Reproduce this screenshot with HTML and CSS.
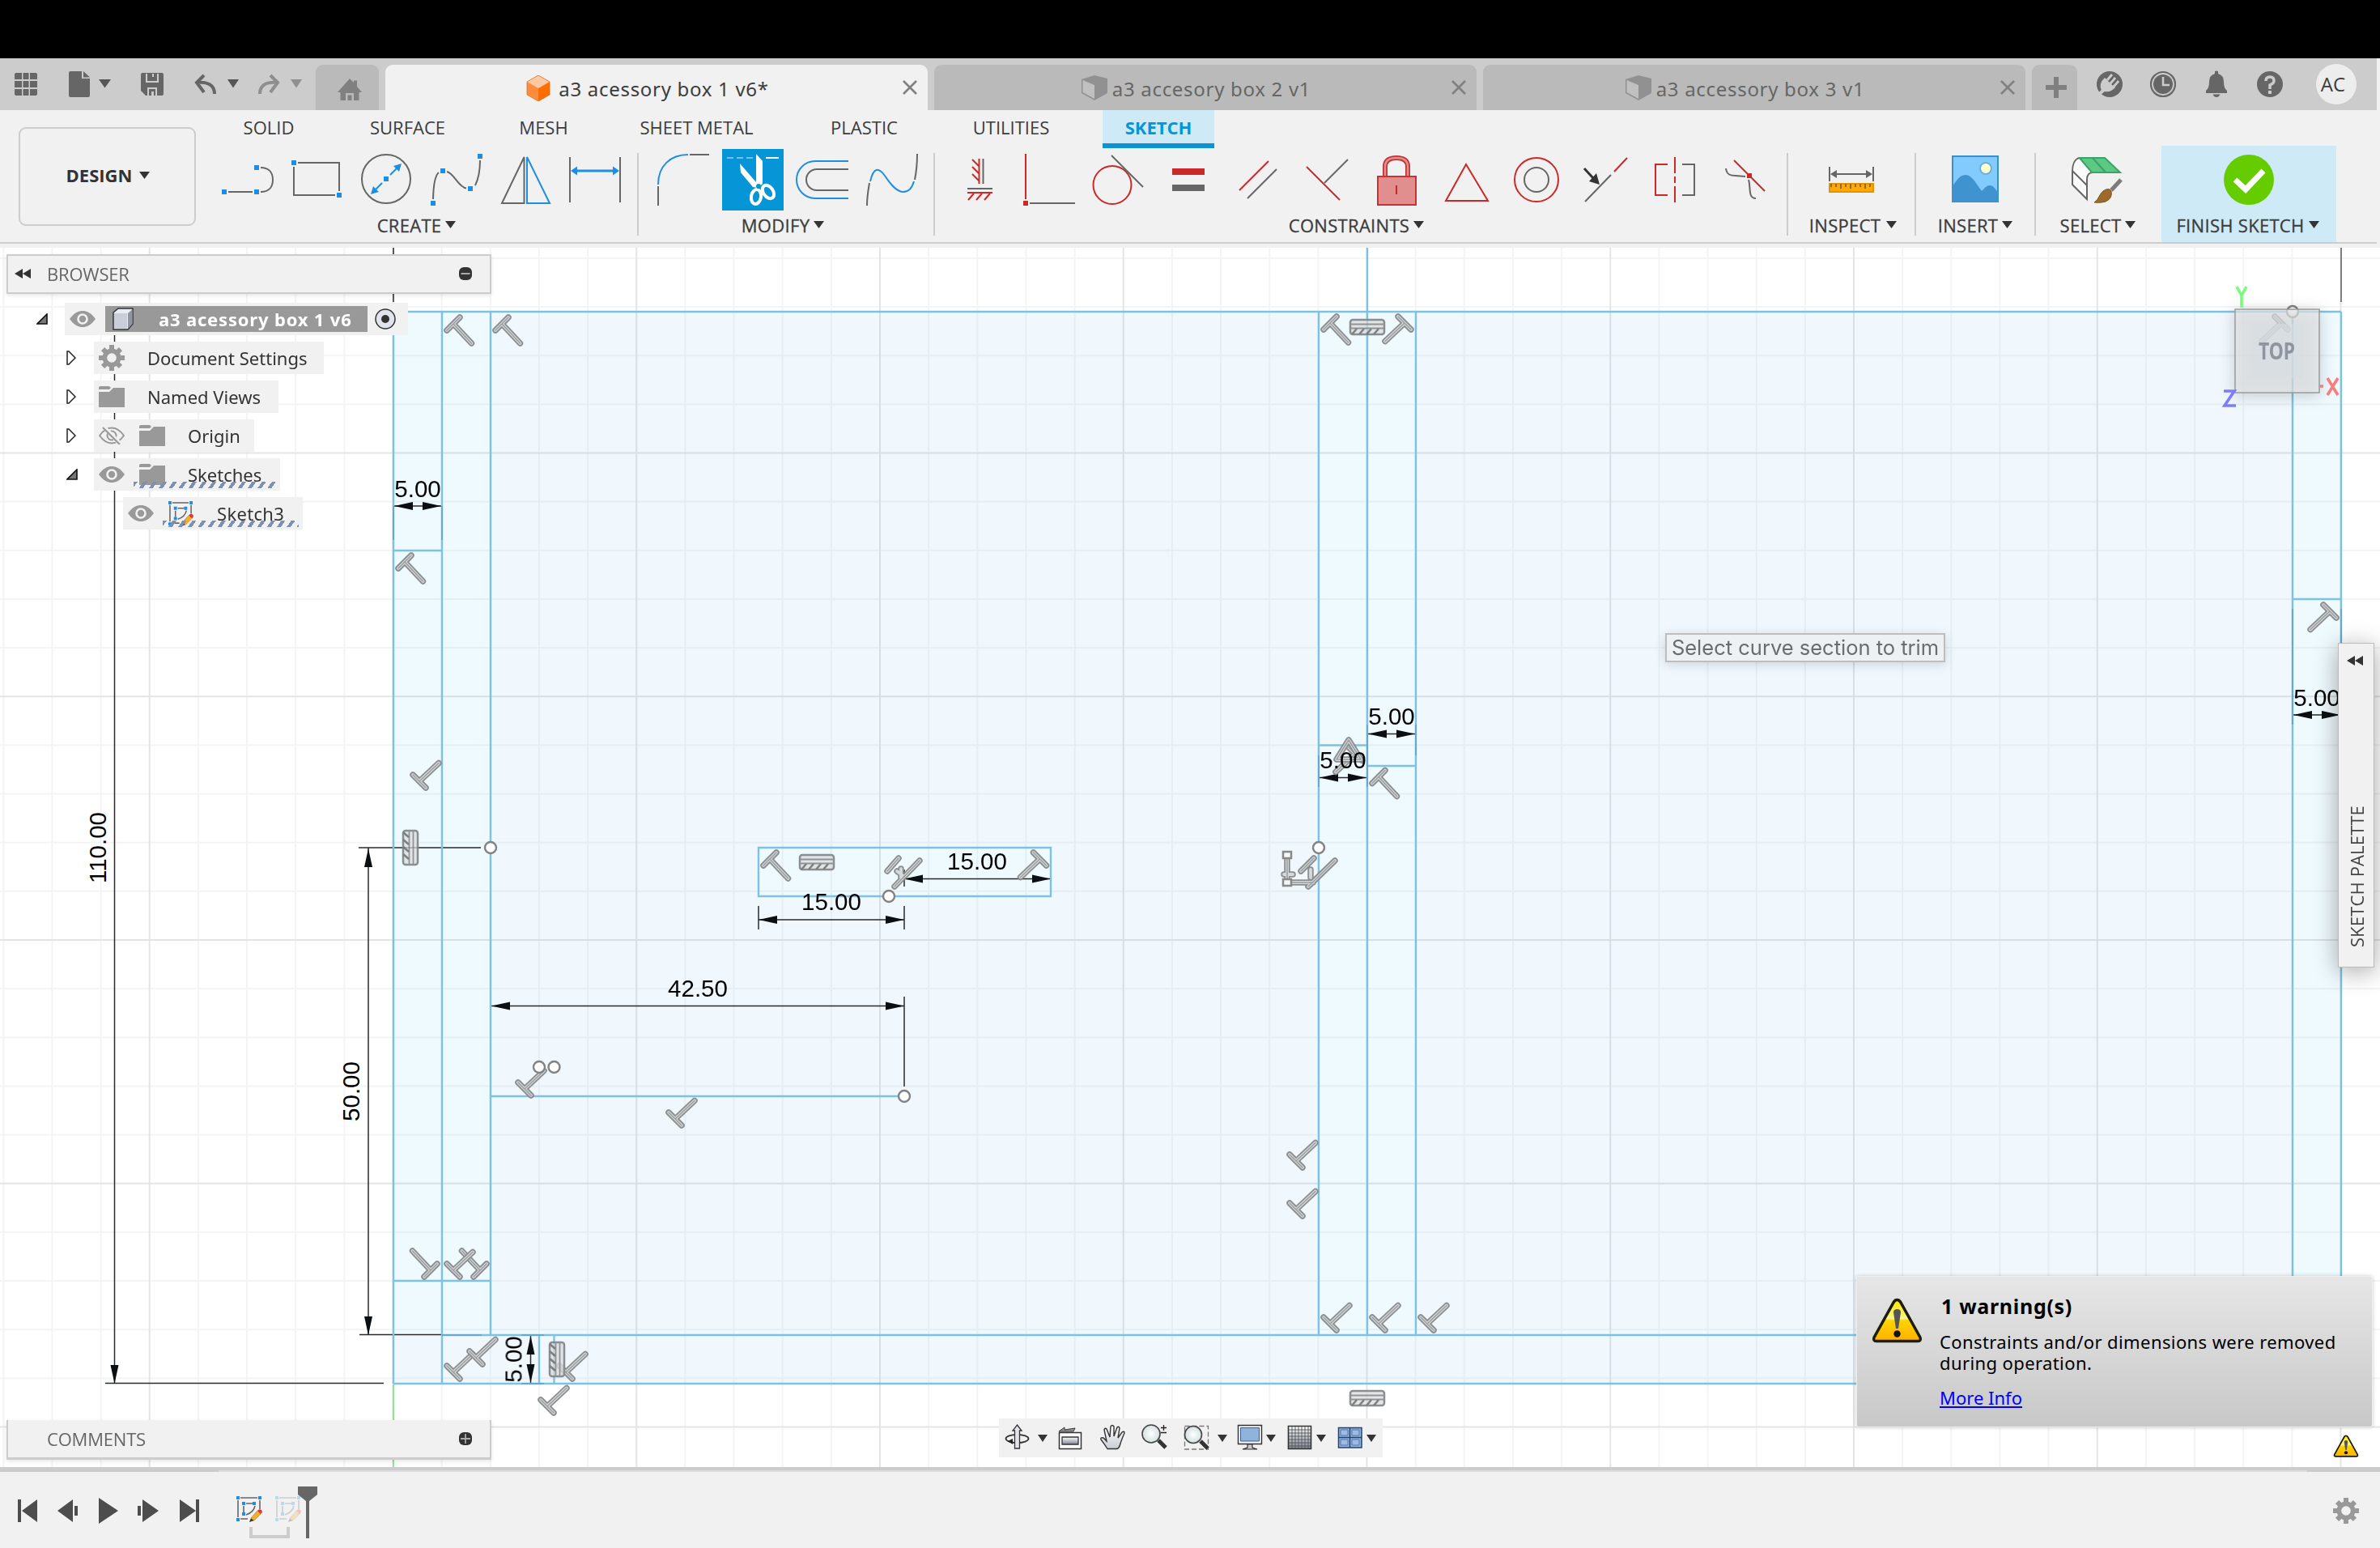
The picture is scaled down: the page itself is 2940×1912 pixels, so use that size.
FILE: index.html
```html
<!DOCTYPE html>
<html lang="en">
<head>
<meta charset="utf-8">
<title>a3 acessory box 1 v6*</title>
<link rel="stylesheet" href="styles.css">
</head>
<body>
<svg class="defs" width="0" height="0" aria-hidden="true">
  <defs>
    <symbol id="caret" viewBox="0 0 13 9"><path d="M0 0H13L6.5 9Z" fill="currentColor"/></symbol>
    <symbol id="close" viewBox="0 0 18 18"><path d="M1 1L17 17M17 1L1 17" stroke="currentColor" stroke-width="2.6"/></symbol>
    <symbol id="cube-gray" viewBox="0 0 32 32"><path d="M0 5L16 0L32 4V22L16 31L0 22Z" fill="#919191"/><path d="M1.5 6L16 12V29L1.5 21Z" fill="#c0c0c0"/></symbol>
    <symbol id="eye" viewBox="0 0 32 20"><path d="M0 10C6 2 11 0 16 0S26 2 32 10C26 18 21 20 16 20S6 18 0 10Z" fill="#999"/><circle cx="16" cy="10" r="5.5" fill="none" stroke="#f1f1f1" stroke-width="2.6"/></symbol>
    <symbol id="eye-off" viewBox="0 0 32 22"><path d="M1 11C6 4 11 1.500 16 1.500S26 4 31 11C26 18 21 20.500 16 20.500S6 18 1 11Z" fill="none" stroke="#999" stroke-width="2"/><circle cx="16" cy="11" r="5.500" fill="none" stroke="#999" stroke-width="2"/><path d="M6 0L27 22" stroke="#f1f1f1" stroke-width="5"/><path d="M5 1L26 22" stroke="#999" stroke-width="2.200"/></symbol>
    <symbol id="folder" viewBox="0 0 32 26"><path d="M0 2Q0 0 2 0H13L15 2L13 4H0Z M0 7H13L18 2H32V26H0Z" fill="#999"/></symbol>
    <symbol id="gear" viewBox="-16 -16 32 32"><g fill="#999"><rect x="-3" y="-16" width="6" height="32"/><rect x="-16" y="-3" width="32" height="6"/><rect x="-3" y="-15.500" width="6" height="31" transform="rotate(45)"/><rect x="-3" y="-15.500" width="6" height="31" transform="rotate(-45)"/><circle r="11.500"/></g><circle r="5.800" fill="#f1f1f1"/></symbol>
    <symbol id="sketch" viewBox="0 0 32 32"><path d="M2 5V26M5 2H26M29 5V16M5 28H14" stroke="#666" stroke-width="1.600"/><path d="M9 12V20M12 9H20M23 12C22 17 18 21 12 23" stroke="#666" fill="none" stroke-width="1.600"/><g fill="#1e8fe0"><path d="M0 0h4v4h-4zM27 0h4v4h-4zM0 27h4v4h-4zM7 7h4v4h-4zM20 7h4v4h-4zM7 20h4v4h-4z"/></g><path d="M16 32L18 27L22 30Z" fill="#333"/><path d="M18 27L26 18L30 22L22 30Z" fill="#f0b02e" stroke="#c98b1c" stroke-width=".8"/><path d="M26 18Q28 15 31 17Q33 20 30 22Z" fill="#e8342a"/></symbol>
    <symbol id="twist-open" viewBox="0 0 14 14"><path d="M13 1V13H1Z" fill="#777" stroke="#111" stroke-width="1.600"/></symbol>
    <symbol id="twist" viewBox="0 0 12 18"><path d="M1 1H3L11 9L3 17H1Z" fill="#fff" stroke="#222" stroke-width="1.500"/></symbol>
    <symbol id="rewind" viewBox="0 0 20 12"><path d="M10 0V12L0 6ZM20 0V12L10 6Z" fill="#333"/></symbol>
    <linearGradient id="warnfill" x1="0" y1="0" x2="0" y2="1"><stop offset="0" stop-color="#ffe600"/><stop offset=".45" stop-color="#fff48a"/><stop offset=".5" stop-color="#ffd400"/><stop offset="1" stop-color="#ffb000"/></linearGradient>
    <symbol id="warn" viewBox="0 0 63 56"><path d="M31.500 2.500Q34 2.500 35.500 5L60 49Q61.500 53.500 57 53.500H6Q1.500 53.500 3 49L27.500 5Q29 2.500 31.500 2.500Z" fill="url(#warnfill)" stroke="#1d1d0c" stroke-width="3.500"/><path d="M27 18Q27 14 31.500 14T36 18L33 38H30Z" fill="#555"/><circle cx="31.500" cy="44.500" r="4.200" fill="#111"/></symbol>
    <symbol id="tee" viewBox="-34 -34 68 68" overflow="visible"><path class="g1" d="M-8 8L8 -8M0 0L22.500 24"/><path class="g2" d="M-8 8L8 -8M0 0L22.500 24"/><path class="g3" d="M-8 8L8 -8M0 0L22.500 24"/></symbol>
    <symbol id="hatch" viewBox="-22 -10 44 20" overflow="visible"><rect x="-21" y="-9" width="42" height="18" rx="3" fill="#d8dbdd" fill-opacity=".75" stroke="#858789" stroke-width="2.500"/><path d="M-21 -3.500H21M-21 1.500H21" stroke="#8c8c8c" stroke-width="1.800"/><path d="M-19 9L-13 2M-10 9L-4 2M-1 9L5 2M8 9L14 2" stroke="#777" stroke-width="2.600"/></symbol>
    <linearGradient id="steel" x1="0" y1="0" x2="0" y2="1"><stop offset="0" stop-color="#fff"/><stop offset="1" stop-color="#c9ccd4"/></linearGradient>
    <linearGradient id="dusk" x1="0" y1="0" x2="0" y2="1"><stop offset="0" stop-color="#fff"/><stop offset="1" stop-color="#7d8593"/></linearGradient>
    <radialGradient id="glass"><stop offset="0" stop-color="#fff"/><stop offset="1" stop-color="#d3e0e0"/></radialGradient>
    <pattern id="minor" patternUnits="userSpaceOnUse" x="484.500" y="558.500" width="60.150" height="60.150"><path d="M1 0V60.150M0 1H60.150" stroke="#606870" stroke-opacity=".075" stroke-width="2"/></pattern>
    <pattern id="major" patternUnits="userSpaceOnUse" x="484.500" y="558.500" width="300.750" height="300.750"><path d="M1 0V300.750M0 1H300.750" stroke="#606870" stroke-opacity=".11" stroke-width="2"/></pattern>
  </defs>
</svg>

<div class="app">
  <div class="notch"></div>

  <header class="titlebar">
    <div class="quick">
      <svg width="66" height="64" viewBox="0 72 66 64"><path fill="#666" d="M20 90h7v8h-9v-6q0-2 2-2zM28.500 90h7v8h-7zM37 90h7q2 0 2 2v6h-9zM18 100h9v8h-9zM28.500 100h7v8h-7zM37 100h9v8h-9zM18 110h9v8h-7q-2 0-2-2zM28.500 110h7v8h-7zM37 110h9v6q0 2-2 2h-7z"/></svg>
      <svg width="88" height="64" viewBox="66 72 88 64"><path fill="#666" d="M87 88H101V97H111V118Q111 120 109 120H87Q85 120 85 118V90Q85 88 87 88ZM103 88L111 95.500H103Z"/><path fill="#555" d="M122 98H137L129.500 108.500Z"/></svg>
      <svg width="76" height="64" viewBox="154 72 76 64"><path fill="#666" d="M176 90H200Q202 90 202 92V116Q202 118 200 118H180L174 112V92Q174 90 176 90Z"/><path fill="#ccc" d="M180 91H196V102H180ZM182 108H194V118H182Z"/><path fill="#666" d="M182 91H188V95H190V91H194V100H182ZM184 110H192V118H190V113H187V118H184Z"/></svg>
      <svg width="78" height="64" viewBox="230 72 78 64"><path fill="none" stroke="#666" stroke-width="4" d="M252 93L243 102L252 114M244 102C257 101 265 105 265 116"/><path fill="#555" d="M281 98H295L288 108.500Z"/></svg>
      <svg width="82" height="64" viewBox="308 72 82 64"><path fill="none" stroke="#8f8f8f" stroke-width="4" d="M334 93L343 102L334 114M342 102C329 101 321 105 321 116"/><path fill="#8f8f8f" d="M359 98H373L366 108.500Z"/></svg>
    </div>
    <div class="home"><svg width="30" height="27" viewBox="417 97 30 27"><path fill="#808080" d="M432 97L437 102V99.500H441V107L447 114H443.500V124H420.500V114H417Z"/><path fill="#bababa" d="M427 115H437V124H434.500V117.500H429.500V124H427Z"/></svg></div>
    <div class="doc active">
      <div class="doc-title"><svg width="32" height="32" viewBox="0 0 32 32"><path d="M2 8L16 0L30 8V24L16 32L2 24Z" fill="#ff8c3b"/><path d="M16 16L30 8V24L16 32Z" fill="#ff6d00"/><path d="M2 8L16 0L30 8L16 16Z" fill="#ffc9a3"/><path d="M2 8L16 0L30 8V24L16 32L2 24Z" fill="none" stroke="#d9721f" stroke-width=".8"/></svg><span>a3 acessory box 1 v6*</span></div>
      <svg class="close" width="18" height="18"><use href="#close"/></svg>
    </div>
    <div class="doc">
      <div class="doc-title"><svg width="32" height="32"><use href="#cube-gray"/></svg><span>a3 accesory box 2 v1</span></div>
      <svg class="close" width="18" height="18"><use href="#close"/></svg>
    </div>
    <div class="doc">
      <div class="doc-title"><svg width="32" height="32"><use href="#cube-gray"/></svg><span>a3 accessory box 3 v1</span></div>
      <svg class="close" width="18" height="18"><use href="#close"/></svg>
    </div>
    <div class="new-doc"><svg width="26" height="26" viewBox="0 0 26 26"><path d="M13 0V26M0 13H26" stroke="#7f7f7f" stroke-width="6"/></svg></div>
    <div class="status">
      <svg width="66" height="64" viewBox="2573 72 66 64"><circle cx="2606" cy="104" r="16" fill="#666"/><path d="M2600 110L2589 120" stroke="#ccc" stroke-width="4"/><path fill="#ccc" d="M2596 112Q2592 103 2600 96L2613 108Q2606 116 2596 112Z"/><path d="M2603 99L2609 92M2611 107L2617 100M2607 103L2613 96" stroke="#ccc" stroke-width="3"/><path d="M2605 101L2610 96M2609 105L2614 100" stroke="#666" stroke-width="2"/></svg>
      <svg width="66" height="64" viewBox="2639 72 66 64"><circle cx="2672" cy="104" r="15" fill="none" stroke="#666" stroke-width="2.200"/><circle cx="2672" cy="104" r="12" fill="#666"/><path d="M2672 95V105H2680" fill="none" stroke="#ccc" stroke-width="2.500"/></svg>
      <svg width="66" height="64" viewBox="2705 72 66 64"><path fill="#666" d="M2736 88Q2738 87 2740 88V91Q2747 93 2747 101Q2747 109 2751 112V115H2725V112Q2729 109 2729 101Q2729 93 2736 91ZM2733.500 116.500H2742.500Q2741 120 2738 120T2733.500 116.500Z"/></svg>
      <svg width="66" height="64" viewBox="2771 72 66 64"><circle cx="2804" cy="104" r="16" fill="#666"/><path d="M2799 100Q2799 95 2804 95T2809 100Q2809 103 2804 105V110" fill="none" stroke="#ccc" stroke-width="3.500"/><rect x="2802" y="112" width="4" height="4" fill="#ccc"/></svg>
      <div class="avatar">AC</div>
    </div>
  </header>

  <div class="ribbon">
    <div class="workspace"><button class="design">DESIGN<svg width="13" height="9"><use href="#caret"/></svg></button></div>
    <div class="panels">
      <nav class="tabs">
        <span class="t-solid">SOLID</span><span class="t-surface">SURFACE</span><span class="t-mesh">MESH</span><span class="t-sheet">SHEET METAL</span><span class="t-plastic">PLASTIC</span><span class="t-util">UTILITIES</span><span class="t-sketch">SKETCH</span>
      </nav>
      <div class="groups">
        <section class="group create">
          <div class="icons">
            <svg viewBox="262 184 86 76"><path class="k" d="M282 237H312M322 207C331 207 337 212 337 222S331 237 322 237"/><path class="sq" d="M274 234h6v6h-6zM314 204h6v6h-6zM314 234h6v6h-6z"/></svg>
            <svg viewBox="348 184 86 76"><path class="k" d="M368 201H419V236M414 241H363V206"/><path class="sq" d="M360 198h6v6h-6zM416 238h6v6h-6z"/></svg>
            <svg viewBox="434 184 86 76"><circle class="k" cx="477" cy="221" r="30"/><path class="b" d="M482 216L491 207M472 226L463 235"/><path class="sq" d="M474 218h6v6h-6zM496 202L493 212L486 205ZM458 240L461 230L468 237Z"/></svg>
            <svg viewBox="520 184 86 76"><path class="k" d="M535 246C535.500 225 538 216 542 213M552 212C561 214 566 231 576 232.500M587 229C591 221 593 208 593 198"/><path class="sq" d="M532 248h6v6h-6zM544 208h6v6h-6zM578 230h6v6h-6zM590 190h6v6h-6z"/></svg>
            <svg viewBox="606 184 86 76"><path class="k" d="M620 251H647.500V194Z"/><path class="b" d="M651 194V251H679Z"/></svg>
            <svg viewBox="693 184 86 76"><path class="k" d="M705 194V250M767 194V250"/><path class="b thick" d="M712 211H760"/><path class="sq" d="M706 211L714 205.500V216.500ZM766 211L758 205.500V216.500Z"/></svg>
          </div>
          <h3>CREATE<svg width="13" height="9"><use href="#caret"/></svg></h3>
        </section>
        <i class="rule"></i>
        <section class="group modify">
          <div class="icons">
            <svg viewBox="801 184 86 76"><path class="k" d="M813 230V254M852 191H876"/><path class="b" d="M813 228C813 205 828 191 850 191"/></svg>
            <svg viewBox="887 184 86 76"><path d="M892 184h76v76h-76z" fill="#0696d7"/><path d="M898 195h8M910 195h8M922 195h8" stroke="#6cc4ee" stroke-width="2"/><path d="M946 195h16" stroke="#fff" stroke-width="2"/><path fill="#fff" d="M934 190L942 199V226Q942 229 937 229Q934 229 934 226ZM914 202L934 225L936 232L930 231L915 213Z"/><g fill="none" stroke="#fff" stroke-width="4"><ellipse cx="934" cy="243" rx="6" ry="9" transform="rotate(10 934 243)"/><ellipse cx="949" cy="237" rx="6" ry="9" transform="rotate(-35 949 237)"/></g><circle cx="937" cy="230" r="3" fill="#0696d7"/></svg>
            <svg viewBox="973 184 86 76"><path class="b" d="M1048 199H1007A23 23 0 0 0 1007 245H1048"/><path class="k" d="M1048 209H1009A13 13 0 0 0 1009 235H1048"/></svg>
            <svg viewBox="1059 184 86 76"><path class="k" d="M1071 254C1071 242 1073 232 1074 226M1130 222C1132 212 1133 200 1133 190"/><path class="b" d="M1075 224C1079 207 1085 206 1093 217C1101 229 1108 237 1116 237C1124 237 1127 231 1129 224"/></svg>
          </div>
          <h3>MODIFY<svg width="13" height="9"><use href="#caret"/></svg></h3>
        </section>
        <i class="rule"></i>
        <section class="group constraints">
          <div class="icons">
            <svg viewBox="1167 184 86 76"><path class="k" d="M1214.500 196V227M1195 233H1226"/><path class="r" d="M1209.500 196V227M1201 197L1209 205M1201 206L1209 214M1201 215L1209 223M1195 238H1226M1203 239L1196 247M1213 239L1206 247M1223 239L1216 247"/></svg>
            <svg viewBox="1253 184 86 76"><path class="r" d="M1267 190V246"/><path class="k" d="M1272 251H1328"/><path fill="#cb2929" d="M1264 248h6v6h-6z"/></svg>
            <svg viewBox="1339 184 86 76"><circle class="r" cx="1374" cy="228.500" r="23.500"/><path class="k" d="M1373 192L1412 231"/></svg>
            <svg viewBox="1425 184 86 76"><path fill="#cb2929" d="M1448 208h40v8h-40z"/><path fill="#666" d="M1448 228h40v8h-40z"/></svg>
            <svg viewBox="1511 184 86 76"><path class="r" d="M1531 235L1567 199"/><path class="k" d="M1541 245L1577 209"/></svg>
            <svg viewBox="1597 184 86 76"><path class="r" d="M1614 206L1655 247"/><path class="k" d="M1665 197L1636 226"/></svg>
            <svg viewBox="1683 184 86 76"><path d="M1711 218V206Q1711 195 1725 195T1739 206V218" fill="none" stroke="#c83232" stroke-width="6"/><path d="M1711 218V206Q1711 195 1725 195T1739 206V218" fill="none" stroke="#e08e8e" stroke-width="2.500"/><path d="M1702 218h47v35h-47z" fill="#e08e8e" stroke="#c83232" stroke-width="2"/><path class="r" d="M1725 229V240"/></svg>
            <svg viewBox="1769 184 86 76"><path class="r" d="M1811 203L1786 248H1838Z"/></svg>
            <svg viewBox="1855 184 86 76"><circle class="r" cx="1898" cy="222" r="27"/><circle class="k" cx="1898" cy="222" r="15"/></svg>
            <svg viewBox="1941 184 86 76"><path d="M1957 208L1968 220" stroke="#333" stroke-width="3"/><path d="M1976 228L1963 224L1972 214Z" fill="#333"/><path class="k" d="M1958 249L1990 216"/><path class="r" d="M1994 212L2010 195"/></svg>
            <svg viewBox="2027 184 86 76"><path class="r" d="M2060 203H2045V241H2060M2069 194V214M2069 218V226M2069 230V250"/><path class="k" d="M2078 203H2093V241H2078"/></svg>
            <svg viewBox="2113 184 86 76"><path class="r" d="M2142 198L2180 236"/><path class="k" d="M2132 208C2133 216 2138 217 2144 217L2156 218M2160 222C2163 232 2159 245 2169 245"/><path fill="#cb2929" d="M2158 214h6v6h-6z"/></svg>
          </div>
          <h3>CONSTRAINTS<svg width="13" height="9"><use href="#caret"/></svg></h3>
        </section>
        <i class="rule"></i>
        <section class="group inspect">
          <div class="icons"><svg viewBox="2245 184 86 76"><path class="k" d="M2261 206V224M2315 206V224M2268 215H2308"/><path fill="#666" d="M2262 215L2270 210V220ZM2314 215L2306 210V220Z"/><path d="M2261 227h54v10h-54z" fill="#ffa800" stroke="#e39400" stroke-width="2"/><path d="M2263 227v4M2269 227v4M2275 227v6M2281 227v4M2287 227v6M2293 227v4M2299 227v4M2305 227v6M2311 227v4" stroke="#7a5a20" stroke-width="1.600"/></svg></div>
          <h3>INSPECT<svg width="13" height="9"><use href="#caret"/></svg></h3>
        </section>
        <i class="rule"></i>
        <section class="group insert">
          <div class="icons"><svg viewBox="2398 184 86 76"><path d="M2413 193h56v56h-56z" fill="#82cbff" stroke="#3d8fcc" stroke-width="2"/><circle cx="2454" cy="208" r="7" fill="#ffffcf" stroke="#6fb0da" stroke-width="2"/><path d="M2413 230C2420 219 2424 216 2429 216C2437 216 2443 228 2449 236C2453 232 2455 229 2459 229C2463 229 2466 233 2469 238V249H2413Z" fill="#3f93cf"/></svg></div>
          <h3>INSERT<svg width="13" height="9"><use href="#caret"/></svg></h3>
        </section>
        <i class="rule"></i>
        <section class="group select">
          <div class="icons"><svg viewBox="2549 184 86 76"><path d="M2568 195C2562 196 2559 203 2559 212V228L2577 246V222C2577 216 2580 213 2584 213Z" fill="#fbfbfb" stroke="#666" stroke-width="2"/><path class="k" d="M2559 211L2577 229"/><path d="M2568 195H2599L2618 213H2583Z" fill="#5bc883" stroke="#3da265" stroke-width="2"/><path d="M2584 195L2600 213" stroke="#3da265" stroke-width="2"/><path d="M2619 222L2607 235" stroke="#7c7c7c" stroke-width="5"/><path d="M2586 250C2592 246 2592 240 2597 236Q2604 231 2607 236Q2609 245 2600 249Q2594 251 2586 250Z" fill="#9c6b2c" stroke="#7a5220" stroke-width="1"/></svg></div>
          <h3>SELECT<svg width="13" height="9"><use href="#caret"/></svg></h3>
        </section>
        <section class="group finish">
          <div class="icons"><svg viewBox="2735 184 86 76"><circle cx="2778" cy="222" r="31" fill="#65cc00"/><path d="M2761 222L2774 234L2796 211" fill="none" stroke="#fff" stroke-width="7"/></svg></div>
          <h3>FINISH SKETCH<svg width="13" height="9"><use href="#caret"/></svg></h3>
        </section>
      </div>
    </div>
  </div>

  <main class="canvas">
    <svg class="drawing" width="2940" height="1506" viewBox="0 306 2940 1506">
      <path fill="#f0f8fe" d="M486 385H2892V1709H486Z"/>
      <path fill="#effafe" d="M486 385H606V1649H486ZM1629 385H1749V1649H1629ZM2832 385H2892V1649H2832ZM937 1047H1298V1107H937Z"/>
      <path fill="url(#minor)" d="M0 306H2940V1812H0Z"/>
      <path fill="url(#major)" d="M0 306H2940V1812H0Z"/>
      <path d="M486 1710V1812" stroke="#90e590" stroke-width="2"/>

      <g class="ext">
        <path d="M486 306V373M141.500 385V1709M130 1708.500H474M455 1047V1649M443 1047H594M444 1648.500H546M1117 1231V1342M937 1119V1148M1117 1119V1148M1117 1074V1095M607 1242.500H1117M937 1136H1117M1117 1085.500H1297M487 625H546M1689 906.500H1749M1629 960.500H1689M2832 883H2892M655.500 1649V1709"/>
        <path class="far" d="M2892 306V373"/>
      </g>
      <g class="edge">
        <path d="M486 385H2892M486 385V1709M546 385V1709M606 385V1649M486 1709H2892V385M546 1649H2892M486 680H546M486 1582H606M666 1649V1709M684.500 1649V1709M937 1047H1298V1107H937ZM606 1354H1117M1629 385V1649M1689 306V1649M1749 385V1649M1629 920.500H1689M1689 946H1749M2832 385V1649M2832 740H2892"/>
        <path d="M486 625V667M546 625V667M1749 895V933M1689 895V972M1629 933V972M2832 752V895M2892 752V895M546 1649H595M644 1649H672M644 1709H672"/>
      </g>
      <g class="heads">
        <path d="M141.500 1709l-5 -23h10zM455 1048l-5 23h10zM455 1649l-5 -23h10zM607 1242.500l23 -5v10zM1117 1242.500l-23 -5v10zM937 1136l23 -5v10zM1117 1136l-23 -5v10zM1117 1085.500l23 -5v10zM1298 1085.500l-23 -5v10zM487 625l23 -5v10zM545 625l-23 -5v10zM1690 906.500l23 -5v10zM1748 906.500l-23 -5v10zM1630 960.500l23 -5v10zM1688 960.500l-23 -5v10zM2833 883l23 -5v10zM2891 883l-23 -5v10zM655.500 1650l-5 23h10zM655.500 1708l-5 -23h10z"/>
      </g>

      <g class="glyphs">
        <use href="#tee" x="-34" y="-34" width="68" height="68" transform="translate(560 400)"/>
        <use href="#tee" x="-34" y="-34" width="68" height="68" transform="translate(620 400)"/>
        <use href="#tee" x="-34" y="-34" width="68" height="68" transform="translate(500 694)"/>
        <use href="#tee" x="-34" y="-34" width="68" height="68" transform="translate(951 1061)"/>
        <use href="#tee" x="-34" y="-34" width="68" height="68" transform="translate(1643 399)"/>
        <use href="#tee" x="-34" y="-34" width="68" height="68" transform="translate(1703 959.500)"/>
        <use href="#tee" x="-34" y="-34" width="68" height="68" transform="translate(1284.500 1061) rotate(90)"/>
        <use href="#tee" x="-34" y="-34" width="68" height="68" transform="translate(1735 399) rotate(90)"/>
        <use href="#tee" x="-34" y="-34" width="68" height="68" transform="translate(1674 931) rotate(90)"/>
        <use href="#tee" x="-34" y="-34" width="68" height="68" transform="translate(2818 399) rotate(90)"/>
        <use href="#tee" x="-34" y="-34" width="68" height="68" transform="translate(2878 755) rotate(90)"/>
        <use href="#tee" x="-34" y="-34" width="68" height="68" transform="translate(532 1569) rotate(180)"/>
        <use href="#tee" x="-34" y="-34" width="68" height="68" transform="translate(593 1569) rotate(180)"/>
        <use href="#tee" x="-34" y="-34" width="68" height="68" transform="translate(560 1569) rotate(-90)"/>
        <use href="#tee" x="-34" y="-34" width="68" height="68" transform="translate(518 965) rotate(-90)"/>
        <use href="#tee" x="-34" y="-34" width="68" height="68" transform="translate(648 1345) rotate(-90)"/>
        <use href="#tee" x="-34" y="-34" width="68" height="68" transform="translate(834 1382) rotate(-90)"/>
        <use href="#tee" x="-34" y="-34" width="68" height="68" transform="translate(560 1695) rotate(-90)"/>
        <use href="#tee" x="-34" y="-34" width="68" height="68" transform="translate(588 1677) rotate(-90)"/>
        <use href="#tee" x="-34" y="-34" width="68" height="68" transform="translate(699 1695) rotate(-90)"/>
        <use href="#tee" x="-34" y="-34" width="68" height="68" transform="translate(676 1737) rotate(-90)"/>
        <use href="#tee" x="-34" y="-34" width="68" height="68" transform="translate(1643 1635) rotate(-90)"/>
        <use href="#tee" x="-34" y="-34" width="68" height="68" transform="translate(1703 1635) rotate(-90)"/>
        <use href="#tee" x="-34" y="-34" width="68" height="68" transform="translate(1763 1635) rotate(-90)"/>
        <use href="#tee" x="-34" y="-34" width="68" height="68" transform="translate(1601 1434) rotate(-90)"/>
        <use href="#tee" x="-34" y="-34" width="68" height="68" transform="translate(1601 1494) rotate(-90)"/>
        <use href="#hatch" x="-22" y="-10" width="44" height="20" transform="translate(1689 404)"/>
        <use href="#hatch" x="-22" y="-10" width="44" height="20" transform="translate(1689 1727)"/>
        <use href="#hatch" x="-22" y="-10" width="44" height="20" transform="translate(1009 1065)"/>
        <use href="#hatch" x="-22" y="-10" width="44" height="20" transform="translate(507 1047) rotate(90)"/>
        <use href="#hatch" x="-22" y="-10" width="44" height="20" transform="translate(688 1679) rotate(90)"/>
        <path class="g1" d="M1110 1060L1096 1076M1136 1063L1105 1095M1108 1076L1116 1082M1113 1073V1084"/>
        <path class="g2" d="M1110 1060L1096 1076M1136 1063L1105 1095M1108 1076L1116 1082M1113 1073V1084"/>
        <path class="g3" d="M1110 1060L1096 1076M1136 1063L1105 1095"/>
        <path class="g1" d="M1623 1060L1607 1076M1649 1063L1616 1095M1590 1056V1090H1622M1586 1080H1597M1619 1074V1084"/>
        <path class="g2" d="M1623 1060L1607 1076M1649 1063L1616 1095M1590 1056V1090H1622M1586 1080H1597M1619 1074V1084"/>
        <path class="g3" d="M1623 1060L1607 1076M1649 1063L1616 1095M1590 1056V1090H1622"/>
        <path d="M1585 1052h10v8h-10zM1585 1086h10v8h-10z" fill="#f4f7f9" stroke="#808080" stroke-width="2.500"/>
        <path class="g1" d="M1666 914L1651 938H1681Z"/><path class="g2" d="M1666 914L1651 938H1681Z"/><path class="g3" d="M1666 914L1651 938H1681Z"/>
      </g>
      <g class="pts">
        <circle cx="606" cy="1047" r="7"/><circle cx="1098" cy="1107" r="7"/><circle cx="1117" cy="1354" r="7"/><circle cx="1629" cy="1047" r="7"/><circle cx="666" cy="1318" r="7"/><circle cx="684.500" cy="1318" r="7"/><circle cx="2832" cy="385" r="7"/>
      </g>
      <g class="dims">
        <text x="862" y="1231">42.50</text>
        <text x="1027" y="1124">15.00</text>
        <text x="1207" y="1074">15.00</text>
        <text x="516" y="613.500">5.00</text>
        <text x="1719" y="895">5.00</text>
        <text x="1659" y="949">5.00</text>
        <text x="2862" y="872">5.00</text>
        <text transform="translate(130.500 1047) rotate(-90)">110.00</text>
        <text transform="translate(443.500 1348) rotate(-90)">50.00</text>
        <text transform="translate(644.500 1679) rotate(-90)">5.00</text>
      </g>
    </svg>

    <aside class="browser">
      <div class="panel-head"><svg width="20" height="12"><use href="#rewind"/></svg><span>BROWSER</span><svg class="pill" width="16" height="16" viewBox="0 0 16 16"><rect width="16" height="16" rx="6" fill="#333"/><path d="M2.500 8H13.500" stroke="#aaa" stroke-width="2"/></svg></div>
      <ul class="tree">
        <li class="l0"><svg class="tw" width="14" height="14"><use href="#twist-open"/></svg>
          <div class="row root"><svg width="32" height="20"><use href="#eye"/></svg><div class="picked"><svg width="26" height="28" viewBox="0 0 26 28"><path d="M1 6L7 1H25V20L19 27H1Z" fill="#e8ecf4" stroke="#333" stroke-width="1.500"/><path d="M2 7H18V26H2Z" fill="#c9ced9"/><path d="M19 7L24.500 2V20L19 26Z" fill="#8f96a3"/></svg><b>a3 acessory box 1 v6</b></div><svg width="26" height="26" viewBox="0 0 26 26"><circle cx="13" cy="13" r="12" fill="#dfe4ee" stroke="#333" stroke-width="1.500"/><circle cx="13" cy="13" r="5" fill="#333"/></svg></div></li>
        <li><svg class="tw" width="12" height="18"><use href="#twist"/></svg>
          <div class="row r2"><svg width="32" height="32"><use href="#gear"/></svg><span>Document Settings</span></div></li>
        <li><svg class="tw" width="12" height="18"><use href="#twist"/></svg>
          <div class="row r3"><svg width="32" height="26"><use href="#folder"/></svg><span>Named Views</span></div></li>
        <li><svg class="tw" width="12" height="18"><use href="#twist"/></svg>
          <div class="row r4"><svg width="32" height="22"><use href="#eye-off"/></svg><svg class="second" width="32" height="26"><use href="#folder"/></svg><span>Origin</span></div></li>
        <li><svg class="tw" width="14" height="14"><use href="#twist-open"/></svg>
          <div class="row r5"><svg width="32" height="20"><use href="#eye"/></svg><svg class="second" width="32" height="26"><use href="#folder"/></svg><span>Sketches</span><i class="stale"></i></div></li>
        <li class="l2"><div class="row r6"><svg width="32" height="20"><use href="#eye"/></svg><svg class="second" width="31" height="31"><use href="#sketch"/></svg><span>Sketch3</span><i class="stale"></i></div></li>
      </ul>
    </aside>

    <div class="panel-head comments"><span>COMMENTS</span><svg class="pill" width="16" height="16" viewBox="0 0 16 16"><rect width="16" height="16" rx="6" fill="#333"/><path d="M2 8H14M8 2V14" stroke="#aaa" stroke-width="1.800"/></svg></div>

    <svg class="viewcube" width="170" height="170" viewBox="2735 340 170 170">
      <rect class="cube-body" x="2761" y="382" width="104" height="103"/>
      <rect x="2779" y="400" width="67" height="67" fill="#d5dce3" fill-opacity=".6"/>
      <text class="top" x="2812.500" y="443.500" textLength="45" lengthAdjust="spacingAndGlyphs">TOP</text>
      <g fill="none" stroke-width="3.600"><path d="M2763 354L2769 365L2775 354M2769 365V380" stroke="#7dfa7d"/><path d="M2875 467L2888 488M2888 467L2875 488M2865 477H2870" stroke="#fa7d7d"/><path d="M2747 483H2760L2748 501H2762" stroke="#7d7dfa"/></g>
    </svg>

    <div class="hint">Select curve section to trim</div>

    <div class="palette"><svg width="20" height="12"><use href="#rewind"/></svg><span>SKETCH PALETTE</span></div>

    <div class="navbar">
      <svg width="62" height="48" viewBox="1234 1752 62 48"><ellipse cx="1256.500" cy="1777" rx="14" ry="5" fill="none" stroke="#333" stroke-width="1.800"/><path d="M1256.500 1760L1262 1767H1259.500V1789H1253.500V1767H1251Z" fill="#e2e4ea" stroke="#333" stroke-width="1.300"/><path d="M1245 1780L1251 1777V1784Z" fill="#222"/><path d="M1282 1772H1294L1288 1781Z" fill="#333"/></svg>
      <svg width="52" height="48" viewBox="1296 1752 52 48"><path d="M1308 1768L1315 1763V1766L1328 1764L1326 1768Z" fill="#999" stroke="#333"/><path d="M1308.500 1769.500h27v20h-27z" fill="#fff" stroke="#333" stroke-width="1.500"/><path d="M1312 1775h20v9h-20z" fill="url(#dusk)" stroke="#333" stroke-width="1.300"/></svg>
      <svg width="52" height="48" viewBox="1348 1752 52 48"><path d="M1368 1789.500Q1364 1783 1360 1778Q1359 1775 1363 1776L1367 1780L1364 1766Q1365 1763 1367 1765L1371 1775L1372 1762Q1374 1759 1376 1762V1774L1380 1763Q1382 1761 1383 1764L1381 1776L1386 1769Q1389 1767 1389 1770Q1386 1777 1384 1783Q1383 1788 1380 1789.500Z" fill="url(#steel)" stroke="#333" stroke-width="1.400"/></svg>
      <svg width="54" height="48" viewBox="1400 1752 54 48"><path d="M1431 1779L1440 1788" stroke="#333" stroke-width="5"/><circle cx="1422" cy="1771" r="11" fill="url(#glass)" stroke="#444" stroke-width="1.600"/><path d="M1434 1763.500H1441M1437.500 1760V1767M1434 1769.500H1441" stroke="#222" stroke-width="1.300"/></svg>
      <svg width="66" height="48" viewBox="1454 1752 66 48"><path d="M1463.500 1761.500h29v28.500h-29z" fill="none" stroke="#777" stroke-width="1.300" stroke-dasharray="6 3"/><path d="M1483 1780L1492 1789" stroke="#333" stroke-width="5"/><circle cx="1474" cy="1772" r="10.500" fill="url(#glass)" stroke="#444" stroke-width="1.600"/><path d="M1504 1772H1516L1510 1781Z" fill="#333"/></svg>
      <svg width="61" height="48" viewBox="1520 1752 61 48"><path d="M1529.500 1760.500h29v23h-29z" fill="#f6f7fa" stroke="#333" stroke-width="1.400"/><path d="M1532.500 1763.500h23v16.500h-23z" fill="#8fb3dd" stroke="#3c5f96"/><path d="M1541 1784h6v4l6 2h-18l6 -2z" fill="#ccc" stroke="#333" stroke-width="1.200"/><path d="M1564 1772H1576L1570 1781Z" fill="#333"/></svg>
      <svg width="62" height="48" viewBox="1581 1752 62 48"><path d="M1591.500 1761.500h28v28h-28z" fill="url(#dusk)" stroke="#333" stroke-width="1.600"/><path d="M1596 1762v27M1600 1762v27M1604 1762v27M1608 1762v27M1612 1762v27M1616 1762v27M1592 1766h27M1592 1770h27M1592 1774h27M1592 1778h27M1592 1782h27M1592 1786h27" stroke="#555" stroke-width=".9"/><path d="M1626 1772H1638L1632 1781Z" fill="#333"/></svg>
      <svg width="65" height="48" viewBox="1643 1752 65 48"><path d="M1653.500 1763.500h28.500v24.500h-28.500zM1667.500 1763.500v24.500M1653.500 1775.500h28.500" fill="#93b4e0" stroke="#26426f" stroke-width="1.500"/><path d="M1656 1766h9v7h-9zM1670 1766h9v7h-9zM1656 1778h9v7h-9zM1670 1778h9v7h-9z" fill="#9dbbe6" stroke="#55779f"/><path d="M1688 1772H1700L1694 1781Z" fill="#333"/></svg>
    </div>

    <div class="alert">
      <svg width="63" height="56"><use href="#warn"/></svg>
      <div><h4>1 warning(s)</h4><p>Constraints and/or dimensions were removed<br>during operation.</p><a href="#">More Info</a></div>
    </div>
    <svg class="alert-flag" width="32" height="28"><use href="#warn"/></svg>
  </main>

  <footer class="timeline">
    <div class="play">
      <svg width="56" height="94" viewBox="6 1818 56 94"><path d="M22 1852h4v28h-4zM46 1852V1880L27 1866Z"/></svg>
      <svg width="44" height="94" viewBox="62 1818 44 94"><path d="M92 1860h4v12h-4zM90 1852V1880L71 1866Z"/></svg>
      <svg width="52" height="94" viewBox="106 1818 52 94"><path d="M122 1850V1882L146 1866Z"/></svg>
      <svg width="50" height="94" viewBox="158 1818 50 94"><path d="M170 1860h4v12h-4zM176 1852V1880L196 1866Z"/></svg>
      <svg width="62" height="94" viewBox="208 1818 62 94"><path d="M242 1852h4v28h-4zM222 1852V1880L242 1866Z"/></svg>
    </div>
    <svg class="track" width="150" height="94" viewBox="270 1818 150 94"><use href="#sketch" x="292" y="1848" width="32" height="32"/><use href="#sketch" x="340" y="1848" width="32" height="32" opacity=".25"/><path d="M310 1886V1898H356V1886" fill="none" stroke="#ccc" stroke-width="4"/><path d="M368 1836H392V1846L382 1854V1900H378V1854L368 1846Z" fill="#666"/></svg>
    <svg class="prefs" width="32" height="32"><use href="#gear"/></svg>
  </footer>
</div>
</body>
</html>
```
FILE: styles.css
```css
* { box-sizing: border-box; }
body { margin: 0; background: #f1f1f1; color: #3c3c3c; font-family: "Noto Sans", "Liberation Sans", sans-serif; }
.defs { position: absolute; }
.app { width: 2940px; height: 1912px; overflow: hidden; display: flex; flex-direction: column; }
.app svg { display: block; flex: none; }
.notch { height: 72px; background: #000; flex: none; }

/* title bar */
.titlebar { width: 2936px; height: 64px; flex: none; background: #ccc; display: flex; align-items: flex-end; }
.quick { display: flex; width: 390px; }
.home { width: 78px; height: 56px; margin-right: 8px; background: #bababa; border-radius: 9px 9px 0 0; display: flex; justify-content: center; padding: 17px 0 0 6px; }
.doc { width: 670px; height: 56px; margin-right: 8px; background: #bababa; color: #666; border-radius: 9px 9px 0 0; display: flex; }
.doc.active { background: #f1f1f1; color: #3c3c3c; }
.doc-title { width: 647px; height: 56px; flex: none; display: flex; justify-content: center; align-items: center; gap: 9px; font-size: 24px; line-height: 32px; letter-spacing: .7px; white-space: nowrap; padding-top: 3px; }
.doc:not(.active) .doc-title { gap: 6px; }
.doc-title svg { margin-top: -1px; }
.close { margin: 19px 0 0 -8px; color: #808080; }
.new-doc { width: 56px; height: 56px; background: #bababa; border-radius: 9px 9px 0 0; padding: 15px 0 0 17px; }
.status { display: flex; align-items: flex-start; margin-left: 7px; height: 64px; }
.avatar { width: 50px; height: 50px; margin: 7px 0 0 24px; border-radius: 50%; background: #ededed; font: 24px/50px "Open Sans", sans-serif; text-align: center; padding-right: 8px; }

/* ribbon */
.ribbon { height: 170px; flex: none; display: flex; background: linear-gradient(#ccc, #ccc) 0 163px / 2936px 2px no-repeat #f1f1f1; font-family: "Open Sans", sans-serif; }
.workspace { width: 242px; padding: 21px 0 0 23px; }
.design { width: 219px; height: 122px; border: 2px solid #ccc; border-radius: 9px; background: none; font: 700 22px "Open Sans", sans-serif; color: #333; display: flex; align-items: center; justify-content: center; gap: 9px; padding: 0 0 4px 2px; }
.tabs { display: flex; height: 47px; padding-left: 12px; font-size: 22px; line-height: 43px; text-align: center; }
.tabs span { flex: none; white-space: nowrap; }
.t-solid { width: 156px; } .t-surface { width: 187px; } .t-mesh { width: 149px; } .t-sheet { width: 229px; } .t-plastic { width: 185px; } .t-util { width: 178px; }
.tabs .t-sketch { width: 138px; margin-left: 24px; background: #cdeaf6; border-bottom: 6px solid #0d92d2; color: #0696d7; font-weight: 700; }
.groups { display: flex; height: 116px; }
.group { flex: none; padding-top: 1px; }
.icons { display: flex; justify-content: center; }
.icons svg { width: 86px; height: 76px; }
.group h3 { margin: 4px 0 0; font-size: 22px; line-height: 28px; font-weight: 400; letter-spacing: .3px; display: flex; justify-content: center; align-items: center; gap: 5px; -webkit-text-stroke: .3px currentColor; white-space: nowrap; }
.group h3 svg { margin-top: -1px; color: #333; }
.rule { width: 2px; height: 102px; margin-top: 6px; background: #ccc; flex: none; }
.create { width: 545px; } .modify { width: 364px; } .constraints { width: 1052px; } .inspect { width: 156px; } .insert { width: 146px; } .select { width: 155px; }
.modify .icons { padding-left: 4px; }
.modify h3 { padding-right: 8px; }
.constraints .icons { padding-left: 4px; }
.constraints h3 { padding-right: 11px; }
.create .icons { padding-left: 10px; }
.inspect h3 { padding-left: 4px; gap: 7px; }
.select h3 { padding-right: 2px; }
.finish { width: 216px; height: 119px; margin-top: -3px; padding-top: 4px; background: #cdeaf6; }
.finish h3 { padding-right: 3px; }
.k, .b, .r { fill: none; stroke-width: 2; }
.k { stroke: #666; } .b { stroke: #1e8fe0; } .r { stroke: #cb2929; }
.thick { stroke-width: 2.8; }
.sq { fill: #1e8fe0; }

/* drawing area */
.canvas { position: relative; width: 2940px; height: 1506px; flex: none; background: #fff; }
.ext path { fill: none; stroke: #2a2a2a; stroke-width: 1.5; }
.ext .far { stroke: #808080; stroke-width: 2; }
.edge path { fill: none; stroke: #7cc3e3; stroke-width: 2.4; }
.edge path + path { stroke: #5c9fc0; stroke-opacity: .7; stroke-width: 2; }
.heads { fill: #0b0f12; }
.g1, .g2, .g3 { fill: none; stroke-linecap: round; stroke-linejoin: round; }
.g1 { stroke: #868889; stroke-width: 7.5; }
.g2 { stroke: #d3d7d9; stroke-width: 3.8; }
.g3 { stroke: #969899; stroke-width: 1.5; }
.glyphs { opacity: .94; }
.pts circle { fill: #fff; stroke: #828282; stroke-width: 2.4; }
.dims { font: 29.5px "Liberation Sans", Arial, sans-serif; text-anchor: middle; fill: #000; }

.browser { position: absolute; left: 8px; top: 8px; width: 599px; }
.panel-head { width: 599px; height: 49px; background: #f1f1f1; border: 2px solid #ccc; display: flex; align-items: center; padding: 0 22px 2px 8px; font: 22px "Open Sans", sans-serif; color: #666; box-shadow: 0 2px 5px rgba(0,0,0,.1); }
.panel-head span { margin-left: 20px; flex: 1; letter-spacing: -.2px; }
.comments { position: absolute; left: 8px; top: 1448px; border-top: 0; border-bottom-width: 3px; padding-bottom: 0; }
.comments span { margin-left: 40px; }
.tree { list-style: none; margin: 11px 0 0; padding: 0; font-size: 22px; color: #333; }
.tree li { display: flex; align-items: center; height: 40px; margin-bottom: 8px; padding-left: 74px; }
.tree .l0 { padding-left: 37px; }
.tree .l2 { padding-left: 144px; }
.tw { flex: none; }
.row { position: relative; height: 40px; background: #f1f1f1; display: flex; align-items: center; padding-left: 6px; line-height: 30px; white-space: nowrap; }
.row span { margin-top: -1px; }
.root { width: 424px; margin-left: 21px; }
.picked { width: 324px; height: 32px; margin: 0 9px 0 12px; background: #999; color: #fff; display: flex; align-items: center; padding-left: 9px; }
.picked b { margin: -1px 0 0 31px; letter-spacing: .82px; }
.r2, .r3, .r4 { margin-left: 22px; }
.r2 { width: 284px; } .r3 { width: 228px; } .r4 { width: 198px; }
.r2 span, .r3 span { margin-left: 28px; }
.second { margin-left: 18px; }
.second + span { margin-left: 28px; }
.r5 { width: 230px; margin-left: 20px; }
.r6 { width: 222px; }
.r6 .second + span { margin-left: 29px; letter-spacing: .3px; }
.stale { position: absolute; left: 49px; right: 5px; bottom: 3px; height: 8px; background: repeating-linear-gradient(125deg, #7d8fb3 0 4px, transparent 4px 10px); }

.viewcube { position: absolute; left: 2735px; top: 34px; }
.cube-body { fill: #e4e6e7; fill-opacity: .68; stroke: #999; stroke-width: 1.5; filter: drop-shadow(0 3px 9px rgba(0,0,0,.25)); }
.top { font: 700 28px "Noto Sans", sans-serif; fill: #8f959e; text-anchor: middle; }
.hint { position: absolute; left: 2057px; top: 476px; width: 346px; height: 36px; border: 2px solid #bdbdbd; background: #eef1f4; color: #6a6d70; font: 25.5px/32px Inter, "Liberation Sans", sans-serif; text-align: center; white-space: nowrap; box-shadow: 0 3px 14px rgba(0,0,0,.15); }
.palette { position: absolute; left: 2888px; top: 488px; width: 45px; height: 401px; background: #f1f1f1; border: 1px solid #bbb; box-shadow: 0 5px 30px rgba(0,0,0,.35); display: flex; flex-direction: column; align-items: center; justify-content: space-between; padding: 15px 0 24px; }
.palette svg { margin-right: 3px; }
.palette span { writing-mode: vertical-rl; transform: rotate(180deg); font: 22px "Open Sans", sans-serif; color: #444; white-space: nowrap; letter-spacing: .15px; }
.navbar { position: absolute; left: 1234px; top: 1446px; display: flex; background: #f1f1f1; }
.alert { position: absolute; left: 2293px; top: 1270px; width: 638px; height: 187px; background: linear-gradient(#e6e6e6, #c8c8c8); border: 1px solid #eee; border-radius: 3px; box-shadow: 0 0 5px rgba(0,0,0,.2); display: flex; gap: 21px; padding: 26px 0 0 18px; color: #000; }
.alert h4 { margin: -7px 0 0 2px; font-size: 25px; line-height: 34px; letter-spacing: .7px; }
.alert p { margin: 14px 0 0; font-size: 22px; line-height: 26px; white-space: nowrap; letter-spacing: .4px; }
.alert a { display: block; margin-top: 17px; font-size: 22px; line-height: 26px; color: #00f; }
.alert-flag { position: absolute; left: 2882px; top: 1466px; }

/* timeline */
.timeline { height: 100px; flex: none; background: linear-gradient(#ddd, #ddd) 270px 4px / 2580px 2px no-repeat, linear-gradient(#ccc, #ccc) 0 0 / 100% 6px no-repeat, #f1f1f1; padding-top: 6px; display: flex; }
.play { display: flex; padding-left: 6px; fill: #4d4d4d; }
.prefs { margin: 32px 26px 0 auto; }
```
